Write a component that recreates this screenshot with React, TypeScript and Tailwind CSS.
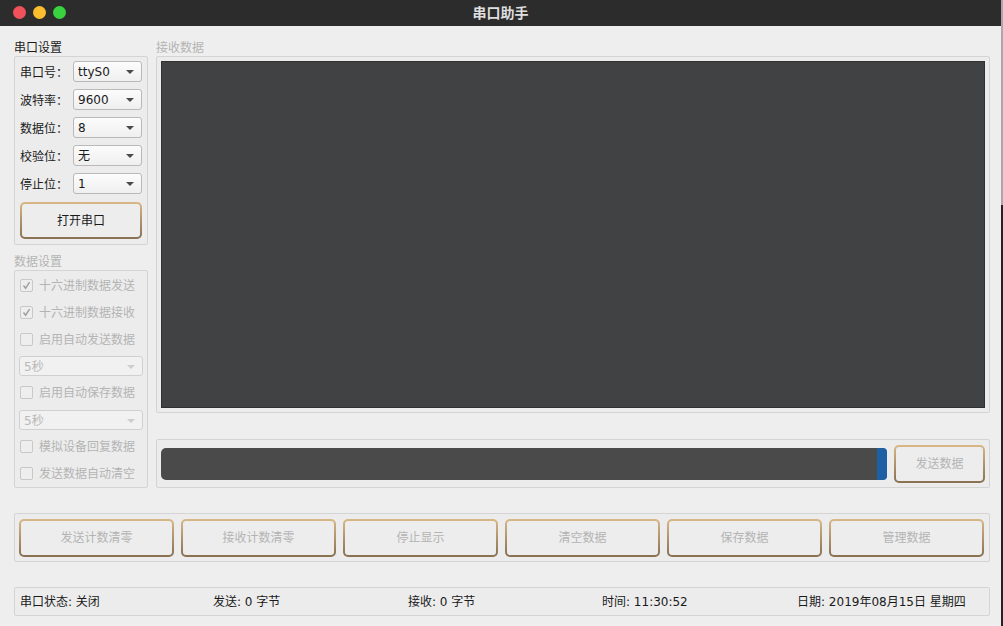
import clsx from 'clsx'

function Combo({ value, disabled }: { value: string; disabled?: boolean }) {
  return (
    <div
      className={clsx(
        'flex items-center justify-between rounded-[3px] border pl-[4px] pr-[7px] pt-[1px] text-[12px]',
        disabled
          ? 'h-[20px] border-[#d0d0d0] bg-[#f1f1f1] text-[#b8b8b8]'
          : 'h-[21px] border-[#b9b9b9] bg-linear-to-b from-[#fcfcfc] to-[#efefef] text-[#1a1a1a]'
      )}
    >
      <span>{value}</span>
      <svg width="8" height="4" viewBox="0 0 8 4">
        <path d="M0 0h8L4 4z" fill={disabled ? '#cdcdcd' : '#4a4a4a'} />
      </svg>
    </div>
  )
}

function GoldButton({
  children,
  disabled,
  className,
}: {
  children: React.ReactNode
  disabled?: boolean
  className?: string
}) {
  return (
    <div className={clsx('rounded-[5px] bg-linear-to-b from-[#d9b887] to-[#887052] p-[2px]', className)}>
      <div
        className={clsx(
          'flex h-full items-center justify-center rounded-[3px] bg-[#ededed] pt-[1px] text-[12px]',
          disabled ? 'text-[#b4b4b4]' : 'text-[#1a1a1a]'
        )}
      >
        {children}
      </div>
    </div>
  )
}

function Check({ label, checked }: { label: string; checked?: boolean }) {
  return (
    <div className="flex h-[27px] items-center pl-[1px]">
      <div className="flex h-[13px] w-[13px] items-center justify-center rounded-[2px] border border-[#c8c8c8] bg-[#eeeeee]">
        {checked && (
          <svg width="9" height="9" viewBox="0 0 9 9">
            <path d="M1.5 4.5L3.6 7.2L7.6 1.2" stroke="#9d9d9d" strokeWidth="1.4" fill="none" />
          </svg>
        )}
      </div>
      <span className="ml-[6px] text-[12px] text-[#b4b4b4]">{label}</span>
    </div>
  )
}

const portRows = [
  ['串口号：', 'ttyS0'],
  ['波特率：', '9600'],
  ['数据位：', '8'],
  ['校验位：', '无'],
  ['停止位：', '1'],
]

const actions = ['发送计数清零', '接收计数清零', '停止显示', '清空数据', '保存数据', '管理数据']

export default function App() {
  return (
    <div className="flex h-[626px] w-[1003px] font-['DejaVu_Sans','Noto_Sans_CJK_SC',sans-serif] text-[12px]">
      <div className="flex w-[1001px] flex-col bg-[#eeeeee]">
        {/* title bar */}
        <div className="relative flex h-[26px] items-center justify-center bg-[#2c2c2c]">
          <div className="absolute left-[13px] top-[6px] flex gap-[7px]">
            <span className="h-[13px] w-[13px] rounded-full bg-[#f1515a]" />
            <span className="h-[13px] w-[13px] rounded-full bg-[#fbbd2e]" />
            <span className="h-[13px] w-[13px] rounded-full bg-[#3ad340]" />
          </div>
          <span className="text-[14px] font-bold text-[#dedede]">串口助手</span>
        </div>

        <div className="flex flex-1 flex-col pl-[14px] pr-[11px] pt-[14px]">
          <div className="flex gap-[8px]">
            {/* left column */}
            <div className="flex w-[134px] flex-col">
              <div className="h-[16px] leading-[16px] text-[#1a1a1a]">串口设置</div>
              <div className="flex flex-col rounded-[2px] border border-[#d4d4d4] bg-[#ececec] px-[5px] pb-[5px] pt-[4px]">
                <div className="flex flex-col gap-[7px]">
                  {portRows.map(([label, value]) => (
                    <div key={label} className="flex items-center">
                      <span className="w-[53px] pt-[2px] text-[#1a1a1a]">{label}</span>
                      <div className="flex-1">
                        <Combo value={value} />
                      </div>
                    </div>
                  ))}
                </div>
                <GoldButton className="mt-[8px] h-[37px]">打开串口</GoldButton>
              </div>

              <div className="mt-[9px] h-[16px] leading-[16px] text-[#b4b4b4]">数据设置</div>
              <div className="flex h-[218px] flex-col rounded-[2px] border border-[#d4d4d4] bg-[#ececec] px-[4px] pt-[1px]">
                <Check label="十六进制数据发送" checked />
                <Check label="十六进制数据接收" checked />
                <Check label="启用自动发送数据" />
                <div className="mt-[3px]">
                  <Combo value="5秒" disabled />
                </div>
                <div className="mt-[3px]">
                  <Check label="启用自动保存数据" />
                </div>
                <div className="mt-[4px]">
                  <Combo value="5秒" disabled />
                </div>
                <div className="mt-[3px]">
                  <Check label="模拟设备回复数据" />
                </div>
                <Check label="发送数据自动清空" />
              </div>
            </div>

            {/* right column */}
            <div className="flex flex-1 flex-col">
              <div className="h-[16px] leading-[16px] text-[#b4b4b4]">接收数据</div>
              <div className="flex h-[357px] rounded-[2px] border border-[#d4d4d4] bg-[#ececec] p-[4px]">
                <div className="flex-1 border border-[#303030] bg-[#414244]" />
              </div>

              <div className="mt-[26px] flex h-[49px] items-center gap-[7px] rounded-[2px] border border-[#d4d4d4] bg-[#ececec] px-[4px]">
                <div className="flex h-[32px] flex-1 justify-end rounded-[5px] bg-[#4a4a4a]">
                  <div className="w-[10px] rounded-r-[4px] bg-[#1f5fa3]" />
                </div>
                <GoldButton disabled className="h-[38px] w-[91px]">
                  发送数据
                </GoldButton>
              </div>
            </div>
          </div>

          {/* action buttons */}
          <div className="mt-[25px] flex h-[49px] items-center gap-[7px] rounded-[2px] border border-[#d4d4d4] bg-[#ececec] px-[4px]">
            {actions.map((a) => (
              <GoldButton key={a} disabled className="h-[38px] w-[155px]">
                {a}
              </GoldButton>
            ))}
          </div>

          {/* status bar */}
          <div className="mt-[25px] grid h-[29px] grid-cols-[193px_195px_194px_195px_1fr] items-center rounded-[2px] border border-[#d4d4d4] bg-[#ececec] pl-[5px] text-[#1a1a1a]">
            <span>串口状态: 关闭</span>
            <span>发送: 0 字节</span>
            <span>接收: 0 字节</span>
            <span>时间: 11:30:52</span>
            <span>日期: 2019年08月15日 星期四</span>
          </div>
        </div>
      </div>
      <div className="flex w-[2px] flex-col">
        <div className="h-[205px] bg-[#a8a8a8]" />
        <div className="flex-1 bg-[#222222]" />
      </div>
    </div>
  )
}
